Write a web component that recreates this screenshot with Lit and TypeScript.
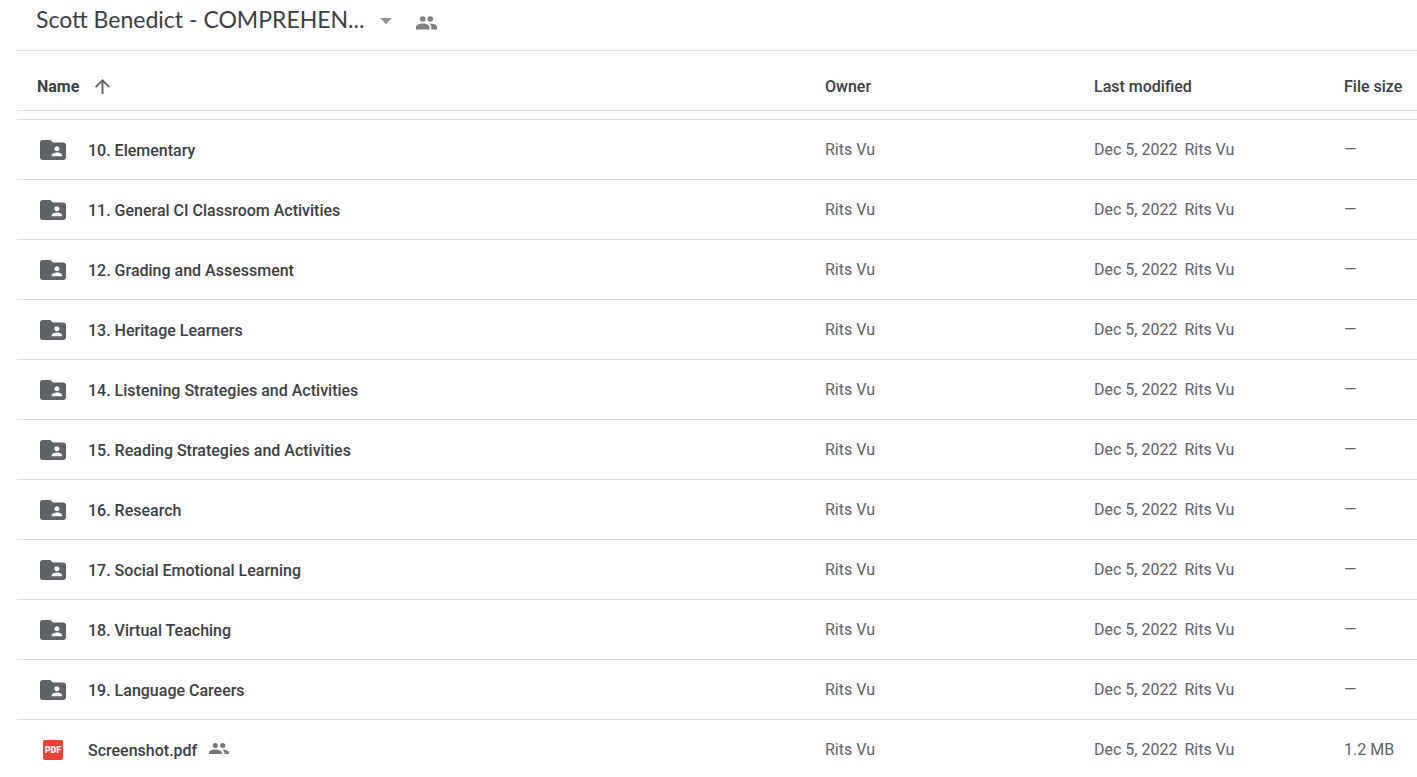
import { LitElement, html, css, svg } from "lit";
import { customElement, property } from "lit/decorators.js";

interface DriveItem {
  name: string;
  kind: "folder" | "pdf";
  owner: string;
  modified: string;
  modifiedBy: string;
  size: string;
  shared?: boolean;
}

const folderNames = [
  "10. Elementary",
  "11. General CI Classroom Activities",
  "12. Grading and Assessment",
  "13. Heritage Learners",
  "14. Listening Strategies and Activities",
  "15. Reading Strategies and Activities",
  "16. Research",
  "17. Social Emotional Learning",
  "18. Virtual Teaching",
  "19. Language Careers",
];

const common = { owner: "Rits Vu", modified: "Dec 5, 2022", modifiedBy: "Rits Vu" };

const items: DriveItem[] = [
  ...folderNames.map((name): DriveItem => ({ name, kind: "folder", size: "—", ...common })),
  { name: "Screenshot.pdf", kind: "pdf", size: "1.2 MB", shared: true, ...common },
];

const glyphs = {
  caret: { box: "0 0 12 6", shape: svg`<path d="M0 0h12L6 6z" />` },
  arrow: {
    box: "4 4 16 16",
    shape: svg`<path d="M4 12l1.41 1.41L11 7.83V20h2V7.83l5.58 5.59L20 12l-8-8-8 8z" />`,
  },
  folder: {
    box: "2 4 20 16",
    shape: svg`<path fill-rule="evenodd" d="M20 6h-8l-2-2H4c-1.1 0-1.99.9-1.99 2L2 18c0 1.1.9 2 2 2h16c1.1 0 2-.9 2-2V8c0-1.1-.9-2-2-2zm-5 3c1.1 0 2 .9 2 2s-.9 2-2 2-2-.9-2-2 .9-2 2-2zm4 8h-8v-1c0-1.33 2.67-2 4-2s4 .67 4 2v1z" />`,
  },
  people: {
    box: "0 0 21 14",
    shape: svg`<circle cx="6.7" cy="3" r="2.800" /><circle cx="14.300" cy="3" r="2.800" /><path d="M6.700 7.600C4.500 7.600 0 8.700 0 11v2.500h13.500V11c0-2.300-4.600-3.400-6.800-3.400zM14.300 7.600l-.9.050c1.100.8 1.900 1.900 1.900 3.350v2.500H21V11c0-2.300-4.500-3.400-6.700-3.400z" />`,
  },
  members: {
    box: "0 0 20 11",
    shape: svg`<circle cx="6.300" cy="2.500" r="2.500" /><circle cx="13.700" cy="2.500" r="2.500" /><path d="M6.300 6.600C4 6.600 0 7.600 0 9.500V11h12.800V9.500c0-1.900-4.200-2.900-6.500-2.900zM13.300 6.600c1.300.8 2.300 1.800 2.300 4.400H20V9.500c0-1.900-4.400-2.900-6.700-2.900z" />`,
  },
};

@customElement("drive-icon")
export class DriveIcon extends LitElement {
  @property() name: keyof typeof glyphs = "folder";

  static styles = css`
    :host {
      display: block;
      flex: none;
    }
    svg {
      display: block;
      width: 100%;
      height: 100%;
      fill: currentColor;
    }
  `;

  render() {
    const glyph = glyphs[this.name];
    return html`<svg viewBox=${glyph.box} preserveAspectRatio="none" aria-hidden="true">${glyph.shape}</svg>`;
  }
}

@customElement("app-root")
export class AppRoot extends LitElement {
  static styles = css`
    :host {
      display: block;
      height: 100vh;
      overflow: hidden;
      background: #fff;
      color: #3c4043;
      font: 400 16px/20px Roboto, "Liberation Sans", sans-serif;
    }
    .page {
      padding-left: 16px;
    }
    button {
      display: flex;
      align-items: center;
      padding: 0;
      border: 0;
      background: none;
      color: inherit;
      font: inherit;
      cursor: pointer;
    }
    .bar {
      display: flex;
      align-items: center;
      gap: 24px;
      height: 38px;
      padding: 0 20px 12px;
      border-bottom: 1px solid #dadce0;
    }
    .title {
      gap: 16px;
    }
    h1 {
      margin: 0;
      font: 400 23px/28px "Google Sans", "Product Sans", Lato, sans-serif;
    }
    .caret {
      width: 12px;
      height: 6px;
      margin-top: 4px;
      color: #919294;
    }
    .share {
      width: 21px;
      height: 14px;
      margin-top: 8px;
      color: #7f8083;
    }
    table {
      width: 100%;
      table-layout: fixed;
      border-spacing: 0;
      padding-left: 1px;
    }
    th,
    td {
      box-sizing: border-box;
      height: 60px;
      padding: 0;
      border-bottom: 1px solid #dadce0;
      text-align: left;
      white-space: nowrap;
    }
    th {
      font-weight: 500;
      padding-top: 12px;
    }
    td {
      color: #5f6368;
    }
    .first {
      padding-left: 20px;
    }
    .owner {
      width: 269px;
    }
    .modified {
      width: 250px;
    }
    .size {
      width: 73px;
    }
    .gap td {
      height: 9px;
    }
    .sort {
      gap: 16px;
      font-weight: 700;
    }
    .arrow {
      width: 15px;
      height: 15px;
      color: #5f6368;
    }
    .item {
      display: flex;
      align-items: center;
      color: #3c4043;
      font-weight: 500;
    }
    .mark {
      display: flex;
      justify-content: center;
      width: 32px;
      margin-right: 19px;
      color: #5f6368;
    }
    .folder {
      width: 26px;
      height: 20px;
    }
    .pdf {
      width: 20px;
      border-radius: 2px;
      background: #ea4335;
      color: #fff;
      font-size: 9px;
      font-weight: 900;
      text-align: center;
    }
    .members {
      width: 20px;
      height: 11px;
      margin: 0 0 2px 12px;
      color: #747579;
    }
    a {
      padding-top: 2px;
      color: inherit;
      line-height: 20px;
      text-decoration: none;
    }
    .by {
      margin-left: 7px;
    }
  `;

  private row(item: DriveItem) {
    return html`
      <tr>
        <td class="first">
          <div class="item">
            <span class="mark">
              ${item.kind === "pdf"
                ? html`<span class="pdf">PDF</span>`
                : html`<drive-icon class="folder" name="folder"></drive-icon>`}
            </span>
            <a href="#">${item.name}</a>
            ${item.shared ? html`<drive-icon class="members" name="members"></drive-icon>` : ""}
          </div>
        </td>
        <td>${item.owner}</td>
        <td>${item.modified}<span class="by">${item.modifiedBy}</span></td>
        <td>${item.size}</td>
      </tr>
    `;
  }

  render() {
    return html`
      <main class="page">
        <header class="bar">
          <button class="title" type="button">
            <h1>Scott Benedict - COMPREHEN...</h1>
            <drive-icon class="caret" name="caret"></drive-icon>
          </button>
          <button type="button" aria-label="Manage access">
            <drive-icon class="share" name="people"></drive-icon>
          </button>
        </header>
        <table>
          <thead>
            <tr>
              <th class="first">
                <button class="sort" type="button">Name<drive-icon class="arrow" name="arrow"></drive-icon></button>
              </th>
              <th class="owner">Owner</th>
              <th class="modified">Last modified</th>
              <th class="size">File size</th>
            </tr>
          </thead>
          <tbody>
            <tr class="gap" aria-hidden="true"><td colspan="4"></td></tr>
            ${items.map((item) => this.row(item))}
          </tbody>
        </table>
      </main>
    `;
  }
}
